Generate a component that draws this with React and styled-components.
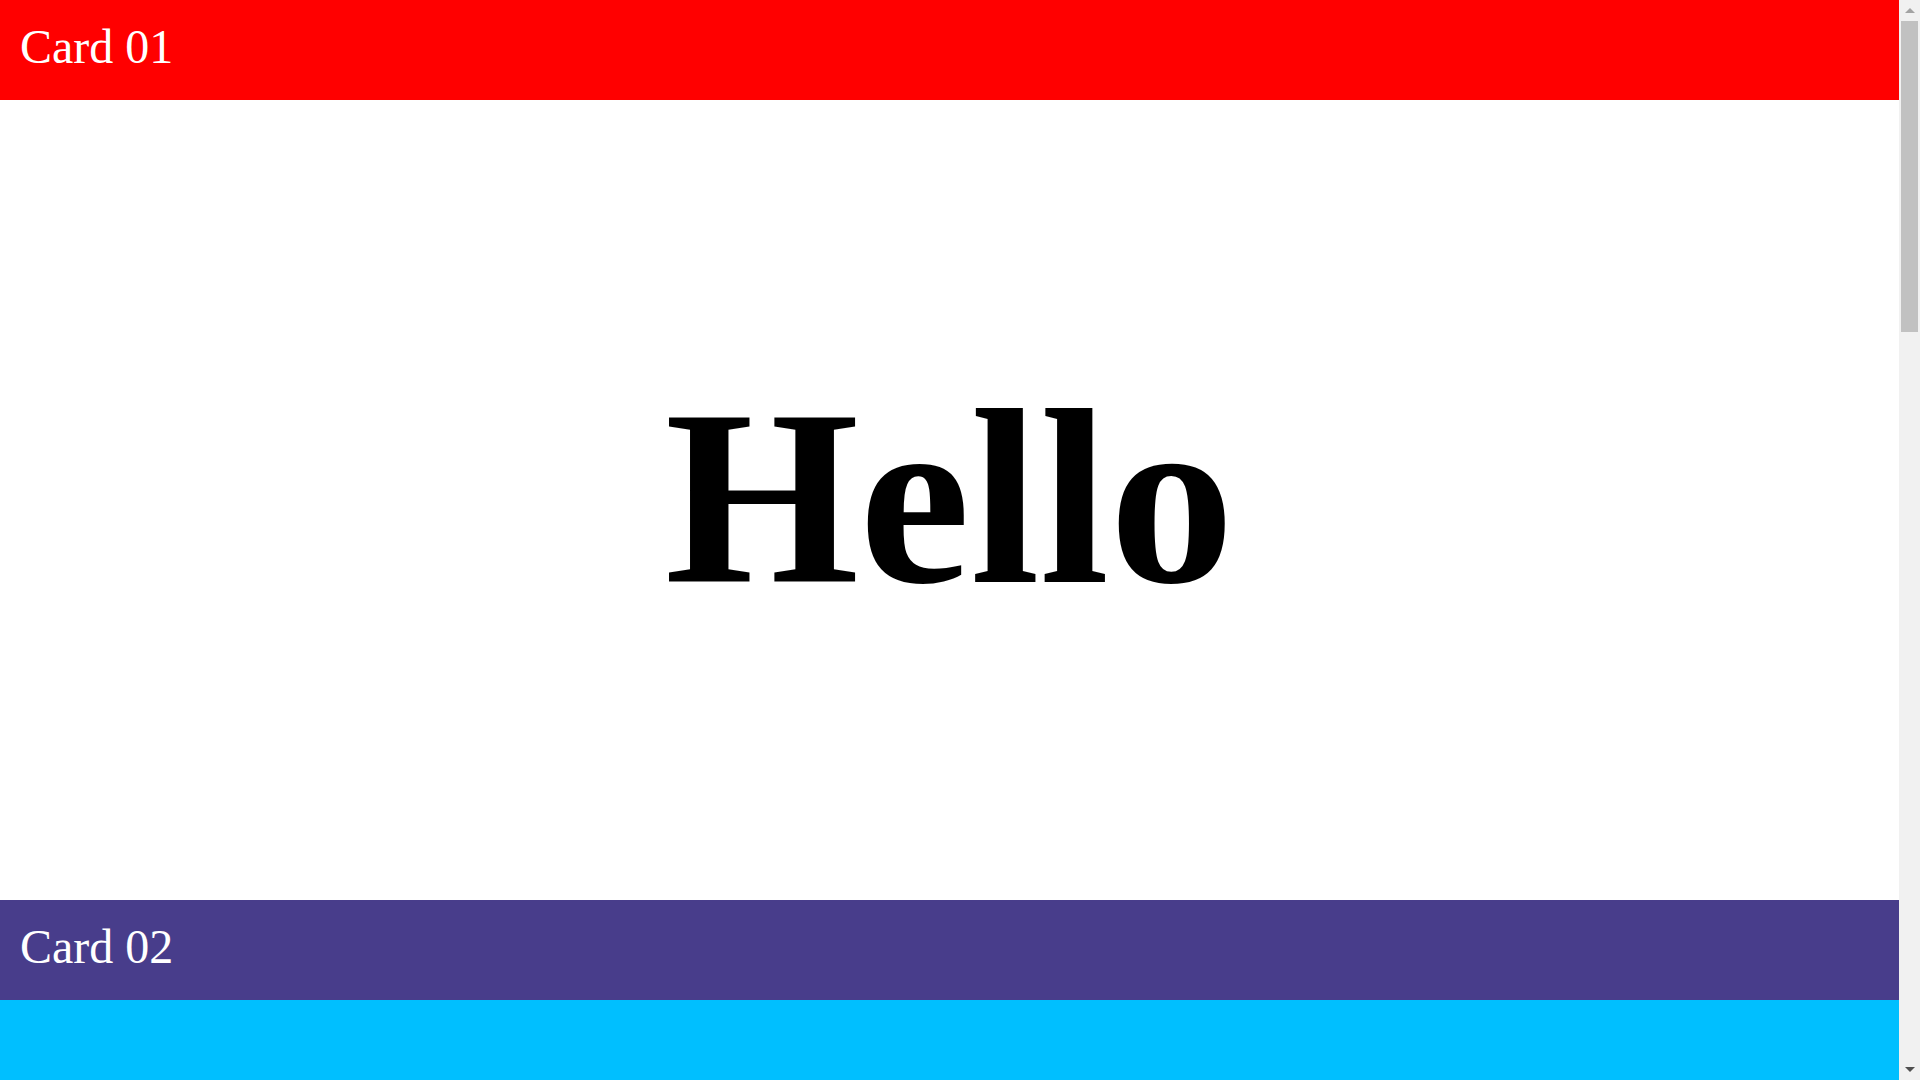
import React from "react";
import styled, { createGlobalStyle } from "styled-components";

const GlobalStyle = createGlobalStyle`
  html, body {
    margin: 0;
    padding: 0;
    overflow: hidden;
  }
  body {
    font-family: "Liberation Serif", "Times New Roman", serif;
    background: #fff;
  }
`;

const Page = styled.div`
  display: flex;
  height: 100vh;
  overflow: hidden;
`;

const Content = styled.main`
  flex: 1;
  min-width: 0;
  display: flex;
  flex-direction: column;
`;

const Card = styled.section`
  display: flex;
  flex-direction: column;
  flex-shrink: 0;
  height: 900px;
`;

const Header = styled.div`
  height: 100px;
  box-sizing: border-box;
  padding: 23px 0 0 20px;
  background: ${({ color }) => color};
  color: #fff;
  font-size: 48px;
  line-height: 48px;
`;

const Body = styled.div`
  flex: 1;
  display: flex;
  align-items: center;
  justify-content: center;
  background: ${({ color }) => color};
`;

const Big = styled.h1`
  margin: 0 0 5px;
  font-family: "Liberation Serif", "Times New Roman", serif;
  font-size: 250px;
  font-weight: 700;
  color: #000;
`;

// fake window scrollbar (thumb at the top)
const Scrollbar = styled.div`
  width: 21px;
  flex-shrink: 0;
  display: flex;
  flex-direction: column;
  background: #f1f1f1;
`;

const ArrowButton = styled.div`
  height: 21px;
  display: flex;
  align-items: center;
  justify-content: center;
`;

const Triangle = styled.span`
  width: 0;
  height: 0;
  border-left: 5px solid transparent;
  border-right: 5px solid transparent;
  ${({ down }) =>
    down ? "border-top: 5px solid #505050;" : "border-bottom: 5px solid #a3a3a3;"}
`;

const Track = styled.div`
  flex: 1;
  padding: 0 2px;
`;

const Thumb = styled.div`
  height: 311px;
  background: #c1c1c1;
`;

const cards = [
  { title: "Card 01", color: "#ff0000", body: "#ffffff", text: "Hello" },
  { title: "Card 02", color: "#483d8b", body: "#00bfff" },
];

function App() {
  return (
    <Page>
      <GlobalStyle />
      <Content>
        {cards.map((card) => (
          <Card key={card.title}>
            <Header color={card.color}>{card.title}</Header>
            <Body color={card.body}>{card.text && <Big>{card.text}</Big>}</Body>
          </Card>
        ))}
      </Content>
      <Scrollbar>
        <ArrowButton>
          <Triangle />
        </ArrowButton>
        <Track>
          <Thumb />
        </Track>
        <ArrowButton>
          <Triangle down />
        </ArrowButton>
      </Scrollbar>
    </Page>
  );
}

export default App;
